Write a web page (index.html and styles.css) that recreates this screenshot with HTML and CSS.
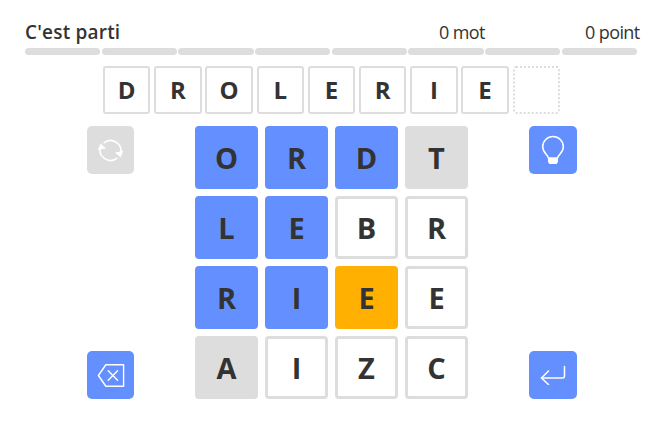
FILE: index.html
```html
<!DOCTYPE html>
<html lang="fr">
<head>
  <meta charset="UTF-8" />
  <title>C'est parti</title>
  <link rel="stylesheet" href="styles.css">
</head>
<body>

  <div class="game">

    <!-- SCORE -->
    <div class="score">
      <div class="score-title">C'est parti</div>
      <div class="score-words">0 mot</div>
      <div class="score-points">0 point</div>
    </div>
    <div class="progress">
      <span></span><span></span><span></span><span></span>
      <span></span><span></span><span></span><span></span>
    </div>

    <!-- CURRENT WORD -->
    <div class="word">
      <div class="slot">D</div>
      <div class="slot">R</div>
      <div class="slot">O</div>
      <div class="slot">L</div>
      <div class="slot">E</div>
      <div class="slot">R</div>
      <div class="slot">I</div>
      <div class="slot">E</div>
      <div class="slot empty"></div>
    </div>

    <!-- BOARD -->
    <div class="board">
      <div class="side left">
        <button class="tool off" aria-label="Mélanger">
          <svg viewBox="0 0 24 24" width="25" height="25" fill="none" stroke="#fff" stroke-width="1.6" stroke-linecap="round">
            <path d="M6 4.500A10 10 0 0 1 21.700 15"/>
            <path d="M18 19.500A10 10 0 0 1 2.300 9"/>
            <path d="M0.500 11 2.600 6.200 6.600 9.800Z" fill="#fff" stroke-width="1"/>
            <path d="M23.500 13 21.400 17.800 17.400 14.200Z" fill="#fff" stroke-width="1"/>
          </svg>
        </button>
        <button class="tool" aria-label="Effacer">
          <svg viewBox="0 0 30 26" width="28" height="25" fill="none" stroke="#fff" stroke-width="1.500" stroke-linejoin="round" stroke-linecap="round">
            <path d="M9.500 1.500H28.500V24.500H9.500L1.500 13Z"/>
            <path d="M12 8 22 18M22 8 12 18"/>
          </svg>
        </button>
      </div>

      <div class="grid">
        <div class="cell blue">O</div>
        <div class="cell blue">R</div>
        <div class="cell blue">D</div>
        <div class="cell used">T</div>

        <div class="cell blue">L</div>
        <div class="cell blue">E</div>
        <div class="cell">B</div>
        <div class="cell">R</div>

        <div class="cell blue">R</div>
        <div class="cell blue">I</div>
        <div class="cell gold">E</div>
        <div class="cell">E</div>

        <div class="cell used">A</div>
        <div class="cell">I</div>
        <div class="cell">Z</div>
        <div class="cell">C</div>
      </div>

      <div class="side">
        <button class="tool" aria-label="Indice">
          <svg viewBox="0 0 24 30" width="24" height="30" fill="none" stroke="#fff" stroke-width="1.500" stroke-linecap="round">
            <path d="M7.500 23C6.500 19.500 1.700 17.500 1.700 11.700A10.300 10.300 0 0 1 22.300 11.700C22.300 17.500 17.500 19.500 16.500 23Z"/>
            <path d="M7 23H17V27L15.500 29H8.500L7 27Z" fill="#fff" stroke="none"/>
          </svg>
        </button>
        <button class="tool" aria-label="Valider">
          <svg viewBox="0 0 26 20" width="26" height="20" fill="none" stroke="#fff" stroke-width="1.500" stroke-linecap="round" stroke-linejoin="round">
            <path d="M24.500 1.500V11Q24.500 13 22.500 13H1.500"/>
            <path d="M8.500 6 1.500 13 8.500 19.500"/>
          </svg>
        </button>
      </div>
    </div>

  </div>

</body>
</html>
```

FILE: styles.css
```css
* { margin: 0; padding: 0; box-sizing: border-box; }
body {
  font-family: "Open Sans", "Noto Sans", sans-serif;
  background: #fff;
  color: #333;
}
.game {
  width: 665px;
  padding: 20px 26px 0 25px;
}
.score {
  display: flex;
  height: 24px;
  align-items: center;
  font-size: 18px;
  letter-spacing: -0.6px;
}
.score-title {
  flex: 1;
  font-size: 19px;
  font-weight: 600;
  letter-spacing: 0.2px;
}
.score-words {
  width: 146px;
}
.score-points {
  width: 54px;
  text-align: right;
  white-space: nowrap;
}
.progress {
  display: flex;
  gap: 1.2px;
  width: 612px;
  margin-top: 4px;
}
.progress span {
  flex: 1;
  height: 7px;
  border-radius: 4px;
  background: #ddd;
}
.word {
  display: flex;
  gap: 3.8px;
  justify-content: center;
  margin-top: 11px;
  padding-right: 1px;
}
.slot {
  width: 47.4px;
  height: 48px;
  padding-bottom: 2px;
  display: flex;
  align-items: center;
  justify-content: center;
  border: 2px solid #ddd;
  border-radius: 3px;
  font-size: 24px;
  font-weight: 700;
}
.slot.empty {
  border: 2px dotted #ddd;
}
.board {
  display: flex;
  justify-content: space-between;
  width: 490px;
  margin: 12px 0 0 62px;
}
.side {
  display: flex;
  flex-direction: column;
  justify-content: space-between;
}
.tool {
  width: 48px;
  height: 48px;
  display: flex;
  align-items: center;
  justify-content: center;
  border: none;
  border-radius: 5px;
  background: #648fff;
}
.left .tool {
  width: 47px;
}
.tool.off {
  background: #ddd;
}
.grid {
  display: grid;
  grid-template-columns: repeat(4, 63px);
  grid-auto-rows: 63px;
  gap: 7px;
}
.cell {
  display: flex;
  align-items: center;
  justify-content: center;
  border: 3px solid #ddd;
  border-radius: 4px;
  font-size: 29px;
  font-weight: 700;
}
.cell.blue {
  background: #648fff;
  border-color: #648fff;
}
.cell.used {
  background: #ddd;
}
.cell.gold {
  background: #ffb000;
  border-color: #ffb000;
}
```
